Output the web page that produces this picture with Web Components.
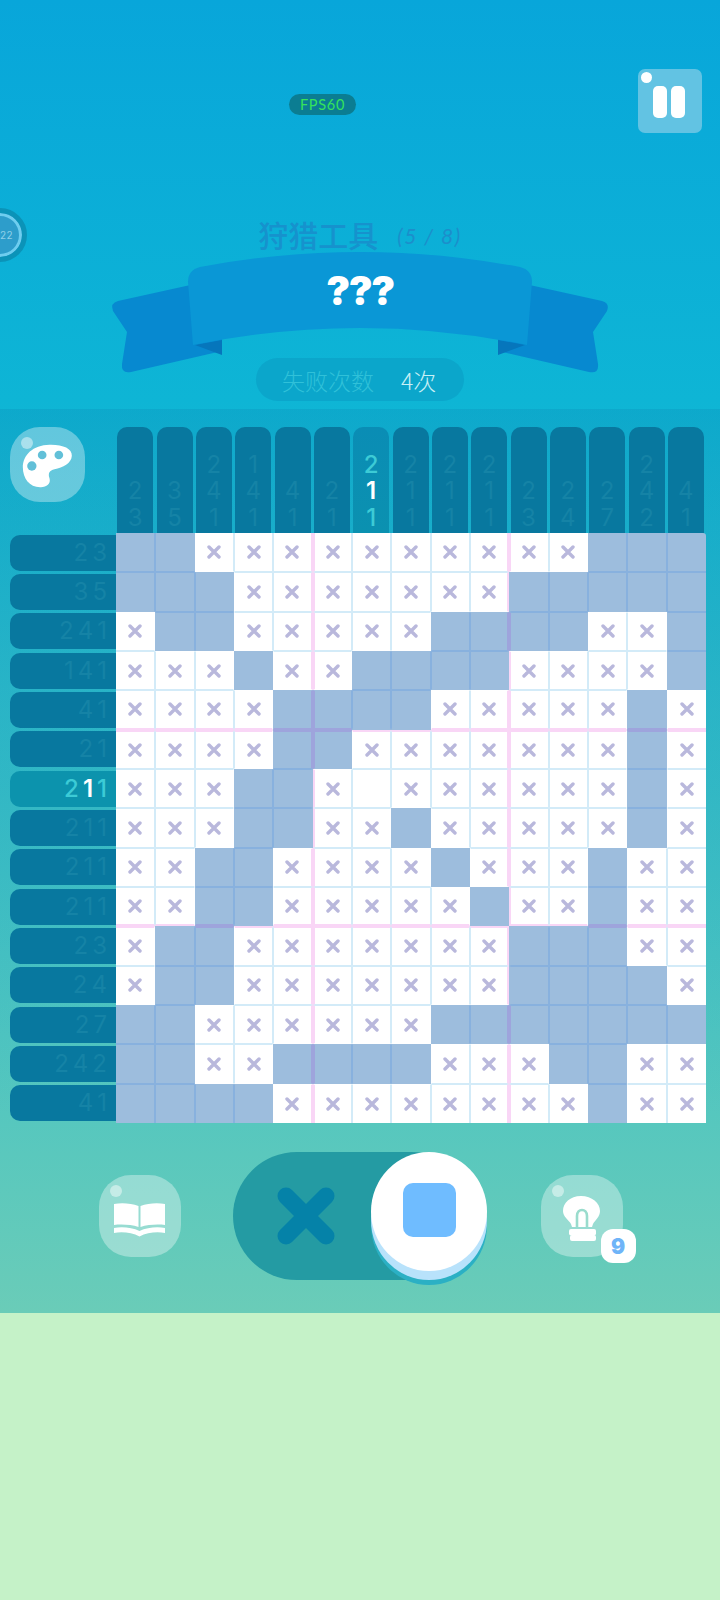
<!DOCTYPE html>
<html lang="zh">
<head>
<meta charset="utf-8">
<title>Nonogram</title>
<style>
html, body { margin: 0; background: #c5f2c8; }
</style>
</head>
<body>
<game-screen>
  <top-panel slot="top">
    <round-timer slot="timer">22</round-timer>
    <fps-badge slot="fps">FPS60</fps-badge>
    <pause-button slot="pause"></pause-button>
    <level-title slot="title" count="(5 / 8)">狩猎工具</level-title>
    <title-ribbon slot="ribbon">???</title-ribbon>
    <fail-counter slot="fails" count="4次">失败次数</fail-counter>
  </top-panel>
  <nono-board slot="board">
    <glossy-button slot="corner" size="75" radius="30">
      <svg width="51" height="44" viewBox="68 102 152 132" style="margin-top:3px">
        <path fill="#fff" d="M70 172C70 135 100 105 150 104C190 103 218 115 217 137C216 160 190 172 165 178C150 181 145 190 150 205C155 222 140 233 122 232C90 232 70 205 70 172Z"/>
        <circle cx="128" cy="135" r="13" fill="#62c0d8"/>
        <circle cx="178" cy="135" r="13" fill="#62c0d8"/>
        <circle cx="97" cy="168" r="14" fill="#62c0d8"/>
      </svg>
    </glossy-button>
  </nono-board>
  <control-bar slot="controls">
    <glossy-button size="82" radius="32" style="margin-top:23px">
      <svg width="54" height="38" viewBox="0 0 54 38" style="margin-top:5px">
        <path fill="#fff" d="M1 4C8 2.5 18 3 25.5 6V27C18 24.5 8 24 1 25Z"/>
        <path fill="#fff" d="M27.5 6C35 3 45 2.5 52 4V25C45 24 35 24.5 27.5 27Z"/>
        <path fill="#fff" d="M1 28C9 26.5 19 27.5 26.5 31C34 27.5 44 26.5 52 28V33C44 31.5 34 32.5 26.5 36.5C19 32.5 9 31.5 1 33Z"/>
      </svg>
    </glossy-button>
    <mode-toggle></mode-toggle>
    <glossy-button size="82" radius="32" style="margin-top:23px">
      <svg width="37" height="45" viewBox="27 26 37 45" style="margin-top:5px">
        <path fill="#fff" d="M45 26C34 26 27 33 27 41C27 47 33 50 35 54L36 57H56L57 54C59 50 64 47 64 41C64 33 56 26 45 26Z"/>
        <path fill="none" stroke="#9adccd" stroke-width="2.6" d="M41 57V46C41 38 51 38 51 46V57"/>
        <rect x="33" y="59" width="27" height="6.5" rx="2" fill="#fff"/>
        <rect x="34" y="65" width="26" height="6" rx="2" fill="#fff"/>
      </svg>
      <count-badge slot="badge">9</count-badge>
    </glossy-button>
  </control-bar>
</game-screen>

<script>
const CLUES = ['23','35','241','141','41','21','211','211','211','211','23','24','27','242','41'];
const BOARD = [
  'FFxxxxxxxxxxFFF',
  'FFFxxxxxxxFFFFF',
  'xFFxxxxxFFFFxxF',
  'xxxFxxFFFFxxxxF',
  'xxxxFFFFxxxxxFx',
  'xxxxFFxxxxxxxFx',
  'xxxFFx.xxxxxxFx',
  'xxxFFxxFxxxxxFx',
  'xxFFxxxxFxxxFxx',
  'xxFFxxxxxFxxFxx',
  'xFFxxxxxxxFFFxx',
  'xFFxxxxxxxFFFFx',
  'FFxxxxxxFFFFFFF',
  'FFxxFFFFxxxFFxx',
  'FFFFxxxxxxxxFxx'
];
const ACTIVE = 6;

function define(name, html) {
  customElements.define(name, class extends HTMLElement {
    constructor() {
      super();
      this.attachShadow({ mode: 'open' });
      this.shadowRoot.innerHTML = typeof html === 'function' ? html(this) : html;
    }
  });
}

define('game-screen', `
  <style>
    :host {
      display: flex; flex-direction: column; width: 720px; height: 1600px; overflow: hidden;
      background: linear-gradient(180deg, #08a6da 0, #0eb5d5 400px, #6accb8 1313px, #c5f2c8 1313px);
    }
  </style>
  <slot name="top"></slot><slot name="board"></slot><slot name="controls"></slot>`);

define('top-panel', `
  <style>
    :host { display: block; height: 409px; position: relative; }
    .bar { display: flex; align-items: flex-start; padding: 69px 18px 0 289px; height: 64px; }
    .mid { display: flex; flex-direction: column; align-items: center; margin-top: 83px; }
    .fps { margin-top: 25px; margin-right: auto; }
  </style>
  <slot name="timer"></slot>
  <div class="bar"><div class="fps"><slot name="fps"></slot></div><slot name="pause"></slot></div>
  <div class="mid"><slot name="title"></slot><slot name="ribbon"></slot><slot name="fails"></slot></div>`);

define('fps-badge', `
  <style>
    :host {
      display: flex; align-items: center; justify-content: center; width: 67px; height: 21px;
      border-radius: 11px; background: #0b7d92; color: #35e35a;
      font: 400 14.5px "Lato", "Liberation Sans", sans-serif; letter-spacing: .7px;
    }
  </style><slot></slot>`);

define('pause-button', `
  <style>
    :host { display: block; position: relative; width: 64px; height: 64px; border-radius: 7px; background: #62c3e3; }
    i { position: absolute; background: #fff; }
    .dot { left: 3px; top: 3px; width: 11px; height: 11px; border-radius: 50%; }
    .a, .b { top: 17px; width: 14px; height: 32px; border-radius: 5px; }
    .a { left: 15px; } .b { left: 33px; }
  </style><i class="dot"></i><i class="a"></i><i class="b"></i>`);

define('round-timer', `
  <style>
    :host {
      position: absolute; left: -27px; top: 208px; width: 54px; height: 54px; box-sizing: border-box;
      border-radius: 50%; background: #2d9dcb; border: 5px solid #0b93b8; box-shadow: inset 0 0 0 3px #6ecdef;
      display: flex; align-items: center; padding-left: 22px;
      color: #8fd0e8; font: 10px "Inter", "Liberation Sans", sans-serif; letter-spacing: .5px;
    }
  </style><slot></slot>`);

define('level-title', el => `
  <style>
    :host {
      display: flex; align-items: center; gap: 19px; height: 36px; color: #1692cd;
      font: 500 30px "Noto Sans CJK SC", "Noto Sans", sans-serif;
    }
    span { font: italic 400 21px "Lato", "Liberation Sans", sans-serif; letter-spacing: 1.5px; color: #1c8ecb; margin-top: 3px; }
  </style><slot></slot><span>${el.getAttribute('count')}</span>`);

define('title-ribbon', `
  <style>
    :host { display: block; position: relative; width: 720px; height: 108px; margin-top: -2px; }
    svg { display: block; overflow: visible; }
    .txt {
      position: absolute; left: 0; right: 0; top: 16px; text-align: center; color: #fff;
      font: 900 40px/50px "Inter", "Liberation Sans", sans-serif; letter-spacing: -1.5px;
    }
  </style>
  <svg width="720" height="108" viewBox="0 250 720 108">
    <g>
      <path fill="#0789d0" d="M195 284L118 301Q110 303 113 311L127 332L122 364Q121 374 131 372L222 351V300Z"/>
      <path fill="#0676bc" d="M195 345L222 340V355Z"/>
    </g>
    <g transform="translate(720 0) scale(-1 1)">
      <path fill="#0789d0" d="M195 284L118 301Q110 303 113 311L127 332L122 364Q121 374 131 372L222 351V300Z"/>
      <path fill="#0676bc" d="M195 345L222 340V355Z"/>
    </g>
    <path fill="#0a97d6" d="M188 282Q188 270 200 267Q360 237 520 267Q532 270 532 282L527 345Q360 311 193 345Z"/>
  </svg>
  <div class="txt"><slot></slot></div>`);

define('fail-counter', el => `
  <style>
    :host {
      display: flex; align-items: center; box-sizing: border-box; width: 208px; height: 43px; padding-left: 26px; gap: 27px;
      border-radius: 22px; background: #0ba6cb; color: #30c1d9;
      font: 300 23px "Noto Sans CJK SC", "Noto Sans", sans-serif;
    }
    span { color: #c8f0f6; }
  </style><slot></slot><span>${el.getAttribute('count')}</span>`);

define('nono-board', () => `
  <style>
    :host {
      display: grid; grid-template-columns: 116px 590px; grid-template-rows: 106px 590px;
      box-sizing: border-box; height: 714px; padding-top: 18px;
      background: linear-gradient(180deg, rgba(0,80,140,.12), rgba(0,80,140,.06) 60%, rgba(0,80,140,0));
    }
    .corner { padding-left: 10px; }
    .cols { display: grid; grid-template-columns: repeat(15, 1fr); }
    .rows { display: grid; grid-template-rows: repeat(15, 1fr); }
  </style>
  <div class="corner"><slot name="corner"></slot></div>
  <div class="cols">${CLUES.map((c, i) => `<hint-col nums="${c}"${i === ACTIVE ? ' active' : ''}></hint-col>`).join('')}</div>
  <div class="rows">${CLUES.map((c, i) => `<hint-row nums="${c}"${i === ACTIVE ? ' active' : ''}></hint-row>`).join('')}</div>
  <nono-grid></nono-grid>`);

const digits = (el) => [...el.getAttribute('nums')].map((d, i) => {
  let cls = '';
  if (el.hasAttribute('active')) cls = i === 1 ? 'on' : 'teal';
  return `<b class="${cls}">${d}</b>`;
}).join('');

const hintStyle = `
  b { font-weight: 400; color: #1583a6; }
  b.teal { color: #3ccbd6; font-weight: 500; }
  b.on { color: #fff; font-weight: 600; }`;

define('hint-col', el => `
  <style>
    :host {
      display: flex; flex-direction: column; justify-content: flex-end; align-items: center;
      box-sizing: border-box; width: 36px; margin-left: 1.2px; padding-bottom: 2px;
      border-radius: 10px 10px 0 0; background: ${el.hasAttribute('active') ? 'linear-gradient(#0a8db5,#0b91b0)' : '#08789f'};
      font: 24px/26.5px "Inter", "Noto Sans", sans-serif;
    }
    ${hintStyle}
  </style>${digits(el)}`);

define('hint-row', el => `
  <style>
    :host {
      display: flex; justify-content: flex-end; align-items: center;
      box-sizing: border-box; margin: 1.7px 0 1.7px 9.5px; padding-right: 9px; gap: 4px;
      border-radius: 10px 0 0 10px; background: ${el.hasAttribute('active') ? '#0c93ad' : '#08789f'};
      font: 24px/26px "Inter", "Noto Sans", sans-serif;
    }
    ${hintStyle}
  </style>${digits(el)}`);

function edge(a, b, pink, self) {
  const fa = a === 'F', fb = b === 'F';
  if (fa && fb) return pink ? '#9ea4dc' : '#88b1de';
  if (!fa && !fb) return pink ? '#f9d6f6' : '#d3ebf8';
  if (pink && self !== 'F') return '#f9d6f6';
  return 'transparent';
}

function cellHtml(r, c) {
  const s = BOARD[r][c];
  const side = (nr, nc, pink) => {
    const other = BOARD[nr] && BOARD[nr][nc];
    if (!other) return '0 solid transparent';
    return `${pink ? 2 : 1}px solid ${edge(s, other, pink, s)}`;
  };
  const style = [
    'border-top:' + side(r - 1, c, r % 5 === 0),
    'border-bottom:' + side(r + 1, c, (r + 1) % 5 === 0),
    'border-left:' + side(r, c - 1, c % 5 === 0),
    'border-right:' + side(r, c + 1, (c + 1) % 5 === 0)
  ].join(';');
  const mark = s === 'x' ? '<svg width="14" height="14" viewBox="0 0 14 14"><path d="M2 2L12 12M12 2L2 12" stroke="#b9b8dc" stroke-width="3.4" stroke-linecap="round"/></svg>' : '';
  return `<div class="${s === 'F' ? 'f' : ''}" style="${style}">${mark}</div>`;
}

define('nono-grid', () => {
  let cells = '';
  for (let r = 0; r < 15; r++) for (let c = 0; c < 15; c++) cells += cellHtml(r, c);
  return `
  <style>
    :host {
      display: grid; grid-template-columns: repeat(15, 1fr); grid-template-rows: repeat(15, 1fr);
      width: 590px; height: 590px; border-radius: 0 3px 0 0; overflow: hidden;
    }
    div { box-sizing: border-box; background: #fff; display: flex; align-items: center; justify-content: center; min-width: 0; min-height: 0; }
    div.f { background: #9dbddd; }
  </style>${cells}`;
});

define('glossy-button', el => `
  <style>
    :host {
      display: flex; position: relative; align-items: center; justify-content: center; flex: none;
      width: ${el.getAttribute('size')}px; height: ${el.getAttribute('size')}px;
      border-radius: ${el.getAttribute('radius')}px; background: rgba(255,255,255,.35);
    }
    .dot { position: absolute; left: 11px; top: 10px; width: 12px; height: 12px; border-radius: 50%; background: rgba(255,255,255,.45); }
    .badge { position: absolute; left: 60px; top: 54px; }
  </style>
  <i class="dot"></i><slot></slot><div class="badge"><slot name="badge"></slot></div>`);

define('count-badge', `
  <style>
    :host {
      display: flex; align-items: center; justify-content: center; width: 35px; height: 34px; border-radius: 12px;
      background: #fff; color: #6fb4f8; font: 900 21px "Inter", "Liberation Sans", sans-serif;
    }
  </style><slot></slot>`);

define('control-bar', `
  <style>
    :host {
      display: flex; align-items: flex-start; box-sizing: border-box; height: 190px;
      padding: 29px 0 0 98.5px; gap: 52.5px;
    }
    ::slotted(mode-toggle) { margin-right: 13px; }
  </style><slot></slot>`);

define('mode-toggle', `
  <style>
    :host {
      display: flex; position: relative; align-items: center; flex: none; box-sizing: border-box;
      width: 242px; height: 128px; padding-left: 44px; border-radius: 64px; background: #249ba3;
    }
    .knob {
      position: absolute; left: 138px; top: 0; width: 116px; height: 119px; border-radius: 50%;
      background: #fff; box-shadow: 0 9px 0 #b8e2fb, 0 14px 0 #2bb0c4;
      display: flex; align-items: center; justify-content: center;
    }
    .knob i { display: block; width: 53px; height: 54px; border-radius: 10px; background: #6fbcff; margin-top: -3px; }
    svg { display: block; }
  </style>
  <svg width="58" height="58" viewBox="0 0 58 58"><path d="M9 9L49 49M49 9L9 49" stroke="#0582a8" stroke-width="17" stroke-linecap="round"/></svg>
  <div class="knob"><i></i></div>`);
</script>
</body>
</html>
